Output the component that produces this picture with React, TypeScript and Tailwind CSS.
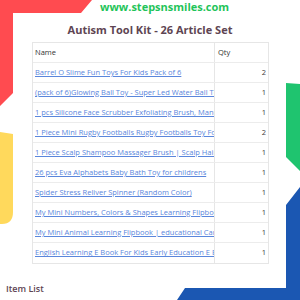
import React from "react";

const rows: [string, number][] = [
  ["Barrel O Slime Fun Toys For Kids Pack of 6", 2],
  ["(pack of 6)Glowing Ball Toy - Super Led Water Ball Toy", 1],
  ["1 pcs Silicone Face Scrubber Exfoliating Brush, Manual", 1],
  ["1 Piece Mini Rugby Footballs Rugby Footballs Toy For Kids", 2],
  ["1 Piece Scalp Shampoo Massager Brush | Scalp Hair Care", 1],
  ["26 pcs Eva Alphabets Baby Bath Toy for childrens", 1],
  ["Spider Stress Reliver Spinner (Random Color)", 1],
  ["My Mini Numbers, Colors & Shapes Learning Flipbook", 1],
  ["My Mini Animal Learning Flipbook | educational Cards", 1],
  ["English Learning E Book For Kids Early Education E Book", 1],
];

export default function App() {
  return (
    <div
      className="relative w-[300px] h-[300px] overflow-hidden bg-white"
      style={{ fontFamily: '"Open Sans", "Noto Sans", sans-serif' }}
    >
      <svg className="absolute left-0 top-0" width="300" height="300" viewBox="0 0 300 300">
        <polygon points="0,0 92,0 81,13 13,13 13,93 0,106" fill="#ff4b50" />
        <path d="M0 132 L13 134 L13 212 Q13 224 2 224 L0 224 Z" fill="#ffd95c" />
        <polygon points="286,83 300,84 300,171 286,157" fill="#1fc46f" />
        <polygon points="300,187 286,205 286,288 185,288 177,300 300,300" fill="#1b57b2" />
        <rect x="13" y="13" width="273" height="275" rx="8" fill="#ffffff" />
      </svg>
      <div className="relative flex flex-col">
        <div className="flex h-[14px] items-center pl-[100px]">
          <span className="text-[11px] leading-[14px] font-bold text-[#1fc45a] whitespace-nowrap">www.stepsnsmiles.com</span>
        </div>
        <p className="m-0 mt-[8px] h-[16px] text-center text-[11px] leading-[16px] font-bold text-[#5e4553] whitespace-nowrap">
          Autism Tool Kit - 26 Article Set
        </p>
        <div className="ml-[32px] mt-[4px] w-[237px] border border-[#e6e6e6] text-[7.5px]">
          <div className="flex h-[20px] border-b border-[#ececec]">
            <div className="w-[182px] border-r border-[#e6e6e6] pl-[2px] flex items-center text-[#333333]">Name</div>
            <div className="flex-1 pl-[3px] flex items-center text-[#333333]">Qty</div>
          </div>
          {rows.map(([name, q], i) => (
            <div key={i} className={i < rows.length - 1 ? "flex h-[20px] border-b border-[#ececec]" : "flex h-[20px]"}>
              <div className="w-[182px] border-r border-[#e6e6e6] pl-[2px] flex items-center overflow-hidden whitespace-nowrap">
                <span className="text-[#5a86dc] underline">{name}</span>
              </div>
              <div className="flex-1 pr-[2px] flex items-center justify-end text-[#3a3a3a]">{q}</div>
            </div>
          ))}
        </div>
        <p className="m-0 mt-[19px] pl-[6px] text-[9px] leading-[12px] font-semibold text-[#5e4553]">Item List</p>
      </div>
    </div>
  );
}
